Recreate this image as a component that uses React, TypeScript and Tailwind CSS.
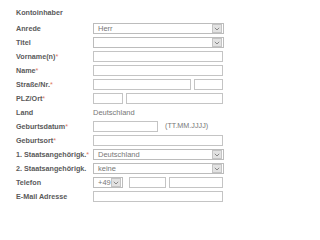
const font = { fontFamily: '"Liberation Sans", Arial, sans-serif' };

function Star() {
  return <span className="text-[#e07a5f] font-normal">*</span>;
}

function Arrow() {
  return (
    <span className="flex h-[9px] w-[10px] items-center justify-center border border-[#c4c4c4] bg-[#e2e2e2]">
      <svg width="6" height="4" viewBox="0 0 6 4">
        <path d="M0.8 0.8 L3 3 L5.2 0.8" fill="none" stroke="#888" strokeWidth="1" />
      </svg>
    </span>
  );
}

function Select({ value, width }: { value?: string; width: string }) {
  return (
    <div className={`flex h-[11px] items-center justify-between border border-[#bcbcbc] bg-white pl-[4px] pr-px text-[7.5px] text-[#777] ${width}`}>
      <span className="leading-none">{value}</span>
      <Arrow />
    </div>
  );
}

function Input({ width }: { width: string }) {
  return <div className={`h-[11px] border border-[#c4c4c4] bg-white ${width}`} />;
}

function Label({ text, star }: { text: string; star?: boolean }) {
  return (
    <div className="flex h-[11px] items-center whitespace-nowrap text-[7.2px] font-bold leading-none text-[#5a5a5a]">
      {text}
      {star && <Star />}
    </div>
  );
}

export default function App() {
  return (
    <div className="h-[207px] w-[244px] bg-white" style={font}>
      <div className="pl-[16px] pt-[8px]">
        <div className="flex h-[11px] items-center text-[7.2px] font-bold text-[#5a5a5a]">Kontoinhaber</div>

        <div className="mt-[4px] grid grid-cols-[77px_130px] gap-y-[3px]">
          <Label text="Anrede" />
          <Select value="Herr" width="w-[131px]" />

          <Label text="Titel" />
          <Select width="w-[131px]" />

          <Label text="Vorname(n)" star />
          <Input width="w-[130px]" />

          <Label text="Name" star />
          <Input width="w-[130px]" />

          <Label text="Straße/Nr." star />
          <div className="flex gap-[3px]">
            <Input width="w-[98px]" />
            <Input width="w-[29px]" />
          </div>

          <Label text="PLZ/Ort" star />
          <div className="flex gap-[3px]">
            <Input width="w-[30px]" />
            <Input width="w-[97px]" />
          </div>

          <Label text="Land" />
          <div className="flex h-[11px] items-center text-[7.5px] text-[#777]">Deutschland</div>

          <Label text="Geburtsdatum" star />
          <div className="flex items-center gap-[7px]">
            <Input width="w-[65px]" />
            <span className="text-[7.2px] text-[#777]">(TT.MM.JJJJ)</span>
          </div>

          <Label text="Geburtsort" star />
          <Input width="w-[130px]" />

          <Label text="1. Staatsangehörigk." star />
          <Select value="Deutschland" width="w-[131px]" />

          <Label text="2. Staatsangehörigk." />
          <Select value="keine" width="w-[131px]" />

          <Label text="Telefon" />
          <div className="flex gap-[3px]">
            <Select value="+49" width="w-[30px]" />
            <div className="ml-[3px]">
              <Input width="w-[37px]" />
            </div>
            <Input width="w-[54px]" />
          </div>

          <Label text="E-Mail Adresse" />
          <Input width="w-[130px]" />
        </div>
      </div>
    </div>
  );
}
